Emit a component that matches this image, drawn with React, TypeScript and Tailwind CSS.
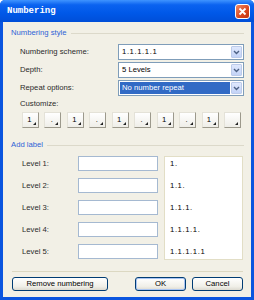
import { useState } from "react";

const comboRows = [
  { label: "Numbering scheme:", value: "1.1.1.1.1", mono: true },
  { label: "Depth:", value: "5 Levels" },
  { label: "Repeat options:", value: "No number repeat", selected: true },
];

const customTokens = ["1", ".", "1", ".", "1", ".", "1", ".", "1", ""];

const levels = [
  { label: "Level 1:", preview: "1." },
  { label: "Level 2:", preview: "1.1." },
  { label: "Level 3:", preview: "1.1.1." },
  { label: "Level 4:", preview: "1.1.1.1." },
  { label: "Level 5:", preview: "1.1.1.1.1" },
];

const GroupHeader = ({ title }: { title: string }) => (
  <div className="flex h-[10px] items-center gap-[4px] pl-[8px] pr-[7px]">
    <span className="whitespace-nowrap text-[#2f63d6]">{title}</span>
    <div className="h-px flex-1 bg-[#dcd9ca]" />
  </div>
);

const Chevron = () => (
  <svg width="7" height="5" viewBox="0 0 7 5">
    <path d="M1 1 L3.5 3.5 L6 1" fill="none" stroke="#4d6185" strokeWidth="1.4" />
  </svg>
);

const Combo = ({
  value,
  selected,
  mono,
}: {
  value: string;
  selected?: boolean;
  mono?: boolean;
}) => (
  <div className="flex h-[16px] w-[126px] border border-[#7f9db9] bg-white p-px">
    <div
      className={`flex flex-1 items-center px-[2px] ${
        selected ? "bg-[#316ac5] text-white" : "text-black"
      } ${mono ? "tracking-[0.6px]" : ""}`}
    >
      {value}
    </div>
    <div className="ml-px flex w-[11px] items-center justify-center rounded-[1px] border border-[#bccbea] bg-[linear-gradient(to_bottom,#dfe8fd,#c3d3f7)]">
      <Chevron />
    </div>
  </div>
);

const CustomButton = ({ token }: { token: string }) => (
  <div className="relative flex h-[16px] w-[17px] items-center justify-center border border-t-[#e4e2d8] border-l-[#e4e2d8] border-r-[#9c998c] border-b-[#9c998c] bg-[linear-gradient(to_bottom,#ffffff,#efeee8)] text-black">
    <span className="-ml-[2px]">{token}</span>
    <svg className="absolute bottom-[2px] right-[2px]" width="3" height="3" viewBox="0 0 3 3">
      <path d="M3 0 L3 3 L0 3 Z" fill="#222" />
    </svg>
  </div>
);

const XpButton = ({
  label,
  width,
  isDefault,
}: {
  label: string;
  width: string;
  isDefault?: boolean;
}) => (
  <button
    className={`flex h-[14px] items-center justify-center rounded-[3px] border border-[#003c74] bg-[linear-gradient(to_bottom,#ffffff,#f0efe8_70%,#dcdad0)] text-black ${width} ${
      isDefault ? "shadow-[inset_0_0_0_1px_#a9c4f2]" : ""
    }`}
  >
    {label}
  </button>
);

export default function App() {
  const [labels, setLabels] = useState<string[]>(["", "", "", "", ""]);

  return (
    <div className="bg-white">
      <div
        className="flex h-[300px] w-[254px] flex-col rounded-t-[5px] bg-[#0b55df] text-[7.7px] leading-[10px]"
        style={{ fontFamily: '"Liberation Sans", Arial, sans-serif' }}
      >
        {/* title bar */}
        <div className="flex h-[22px] items-center rounded-t-[5px] bg-[linear-gradient(to_bottom,#3f94ff_0%,#0b63f0_22%,#0058e8_60%,#004ed8_100%)] pl-[7px] pr-[4px]">
          <span
            className="flex-1 text-[9px] font-bold text-white"
            style={{ fontFamily: '"Liberation Mono", monospace' }}
          >
            Numbering
          </span>
          <div className="flex h-[15px] w-[15px] items-center justify-center rounded-[3px] border border-white bg-[linear-gradient(135deg,#f08a64,#d9461e_60%,#c13512)]">
            <svg width="9" height="9" viewBox="0 0 9 9">
              <path d="M1.5 1.5 L7.5 7.5 M7.5 1.5 L1.5 7.5" stroke="white" strokeWidth="1.8" />
            </svg>
          </div>
        </div>

        {/* body */}
        <div className="mx-[3px] mb-[3px] flex flex-1 flex-col bg-[#f2f0e6] pt-[6px] text-[#2b2b2b]">
          <GroupHeader title="Numbering style" />

          <div className="mt-[6px] flex flex-col gap-[2px] pl-[17px] pr-[7px]">
            {comboRows.map((row) => (
              <div key={row.label} className="flex items-center justify-between">
                <span>{row.label}</span>
                <Combo value={row.value} selected={row.selected} mono={row.mono} />
              </div>
            ))}
          </div>

          <div className="mt-[3px] pl-[17px]">Customize:</div>
          <div className="mt-[3px] flex justify-between pl-[19px] pr-[10px]">
            {customTokens.map((t, i) => (
              <CustomButton key={i} token={t} />
            ))}
          </div>

          <div className="mt-[12px]">
            <GroupHeader title="Add label" />
          </div>

          <div className="mt-[6px] flex pl-[19px] pr-[8px]">
            <div className="flex flex-col gap-[7px]">
              {levels.map((lvl, i) => (
                <div key={lvl.label} className="flex h-[15px] items-center">
                  <span className="w-[56px]">{lvl.label}</span>
                  <input
                    value={labels[i]}
                    onChange={(e) =>
                      setLabels((prev) => prev.map((v, j) => (j === i ? e.target.value : v)))
                    }
                    className="h-[15px] w-[80px] border border-[#a5b9d1] bg-white px-[2px] outline-none"
                  />
                </div>
              ))}
            </div>
            <div className="ml-[6px] flex h-[104px] w-[79px] flex-col gap-[7px] border border-[#e2dec6] bg-white pl-[5px]">
              {levels.map((lvl) => (
                <div key={lvl.preview} className="flex h-[15px] items-center tracking-[0.6px] text-black">
                  {lvl.preview}
                </div>
              ))}
            </div>
          </div>

          <div className="ml-[9px] mr-[8px] mt-[11px] h-px bg-[#dcd8c2]" />

          <div className="mt-[5px] flex items-center pl-[9px] pr-[8px]">
            <XpButton label="Remove numbering" width="w-[96px]" />
            <div className="flex-1" />
            <XpButton label="OK" width="w-[51px]" isDefault />
            <div className="w-[6px]" />
            <XpButton label="Cancel" width="w-[51px]" />
          </div>
        </div>
      </div>
    </div>
  );
}
